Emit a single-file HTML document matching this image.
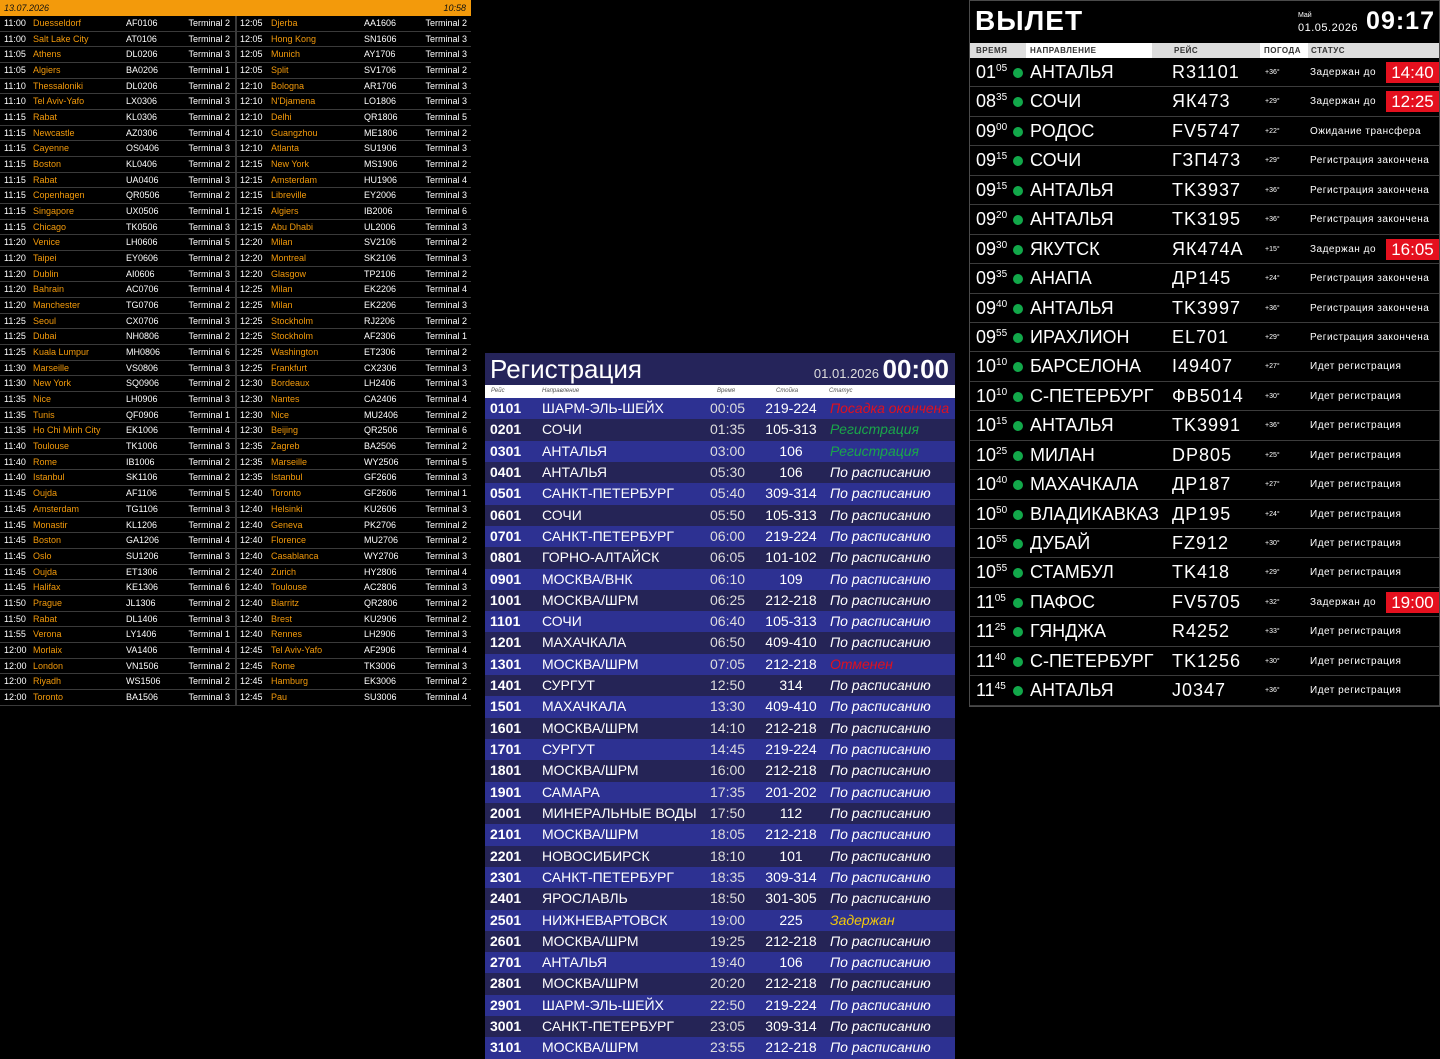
<!DOCTYPE html>
<html><head><meta charset="utf-8">
<style>
*{margin:0;padding:0;box-sizing:border-box}
body{width:1440px;height:1059px;background:#000;position:relative;overflow:hidden;font-family:"Liberation Sans",sans-serif;white-space:nowrap}
#L{position:absolute;left:0;top:0;width:471px;height:707px;background:#000}
#L .h{height:16px;background:#f39a0b;color:#111;font-size:9px;font-style:italic;line-height:16px;padding:0 4px;position:relative}
#L .h span{position:absolute;right:5px;top:0}
.col{position:absolute;top:16px;width:235px}
.c1{left:0}.c2{left:236px}
.vl{position:absolute;left:235px;top:16px;width:2px;height:690px;background:#3a3a3a}
.r{height:15.68px;border-bottom:1px solid #3a3a3a;position:relative;font-size:9px;color:#fff;line-height:15px}
.r span{position:absolute;top:0}
.r .a{left:4px}.r .b{left:33px;color:#f39a0b}.r .c{left:126px}.r .d{right:5px}
.c2 .r .a{left:4px}.c2 .r .b{left:35px}.c2 .r .c{left:128px}.c2 .r .d{right:4px}
#M{position:absolute;left:485px;top:353px;width:470px;height:706px;background:#252456}
#M .h{height:32px;background:#25245a;color:#fff;position:relative}
#M .h .t{position:absolute;left:5px;top:1px;font-size:26px}
#M .h .d{position:absolute;right:76px;top:13px;font-size:13px;color:#ddd}
#M .h .k{position:absolute;right:6px;top:1px;font-size:26px;font-weight:bold}
#M .ch{height:13px;background:#fff;position:relative;font-size:6px;font-style:italic;color:#555}
#M .ch span,.m span{position:absolute}
.m{height:21.32px;position:relative;color:#fff;font-size:14px;line-height:21px}
.m:nth-child(odd){background:#2d3192}
.m .a{left:5px;font-weight:bold}.m .b{left:57px}.m .c{left:225px;color:#ddd}.m .d{left:275px;width:62px;text-align:center}.m .e{left:345px;font-style:italic}
.red{color:#e0101e}.grn{color:#1aa64a}.yel{color:#f2c80c}
#R{position:absolute;left:969px;top:0;width:471px;height:707px;background:#000;border:1px solid #4a4a4a}
#R .h{height:42px;position:relative;color:#fff}
#R .h .t{position:absolute;left:5px;top:4px;font-size:28px;font-weight:bold;letter-spacing:1px}
#R .h .mo{position:absolute;left:328px;top:11px;font-size:7px}
#R .h .d{position:absolute;left:328px;top:21px;font-size:11px;letter-spacing:.5px}
#R .h .k{position:absolute;right:4px;top:6px;font-size:25px;font-weight:bold;letter-spacing:1px}
#R .ch{height:15px;background:#ddd;position:relative;font-size:8px;font-weight:bold;color:#333;letter-spacing:.5px;line-height:16px}
#R .ch span{position:absolute;top:0}
.q{height:29.45px;border-bottom:1px solid #3c3c3c;position:relative;color:#fff;line-height:29px}
.q span{position:absolute;top:0}
.q .a{left:6px;font-size:18px}.q .a sup{font-size:10px;vertical-align:7px;line-height:0}
.q .g{left:43px;top:10px;width:10px;height:10px;border-radius:50%;background:#12a84a}
.q .b{left:60px;font-size:18px}
.q .c{left:202px;font-size:18px;letter-spacing:1px}
.q .w{left:295px;font-size:7px}
.q .s{left:340px;font-size:10px;letter-spacing:.5px}
.q .x{left:416px;top:4px;width:53px;height:21px;background:#e5101e;font-size:17px;line-height:21px;text-align:center}
</style></head><body>
<div id="L">
<div class="h">13.07.2026<span>10:58</span></div>
<div class="vl"></div>
<div class="col c1">
<div class="r"><span class="a">11:00</span><span class="b">Duesseldorf</span><span class="c">AF0106</span><span class="d">Terminal 2</span></div>
<div class="r"><span class="a">11:00</span><span class="b">Salt Lake City</span><span class="c">AT0106</span><span class="d">Terminal 2</span></div>
<div class="r"><span class="a">11:05</span><span class="b">Athens</span><span class="c">DL0206</span><span class="d">Terminal 3</span></div>
<div class="r"><span class="a">11:05</span><span class="b">Algiers</span><span class="c">BA0206</span><span class="d">Terminal 1</span></div>
<div class="r"><span class="a">11:10</span><span class="b">Thessaloniki</span><span class="c">DL0206</span><span class="d">Terminal 2</span></div>
<div class="r"><span class="a">11:10</span><span class="b">Tel Aviv-Yafo</span><span class="c">LX0306</span><span class="d">Terminal 3</span></div>
<div class="r"><span class="a">11:15</span><span class="b">Rabat</span><span class="c">KL0306</span><span class="d">Terminal 2</span></div>
<div class="r"><span class="a">11:15</span><span class="b">Newcastle</span><span class="c">AZ0306</span><span class="d">Terminal 4</span></div>
<div class="r"><span class="a">11:15</span><span class="b">Cayenne</span><span class="c">OS0406</span><span class="d">Terminal 3</span></div>
<div class="r"><span class="a">11:15</span><span class="b">Boston</span><span class="c">KL0406</span><span class="d">Terminal 2</span></div>
<div class="r"><span class="a">11:15</span><span class="b">Rabat</span><span class="c">UA0406</span><span class="d">Terminal 3</span></div>
<div class="r"><span class="a">11:15</span><span class="b">Copenhagen</span><span class="c">QR0506</span><span class="d">Terminal 2</span></div>
<div class="r"><span class="a">11:15</span><span class="b">Singapore</span><span class="c">UX0506</span><span class="d">Terminal 1</span></div>
<div class="r"><span class="a">11:15</span><span class="b">Chicago</span><span class="c">TK0506</span><span class="d">Terminal 3</span></div>
<div class="r"><span class="a">11:20</span><span class="b">Venice</span><span class="c">LH0606</span><span class="d">Terminal 5</span></div>
<div class="r"><span class="a">11:20</span><span class="b">Taipei</span><span class="c">EY0606</span><span class="d">Terminal 2</span></div>
<div class="r"><span class="a">11:20</span><span class="b">Dublin</span><span class="c">AI0606</span><span class="d">Terminal 3</span></div>
<div class="r"><span class="a">11:20</span><span class="b">Bahrain</span><span class="c">AC0706</span><span class="d">Terminal 4</span></div>
<div class="r"><span class="a">11:20</span><span class="b">Manchester</span><span class="c">TG0706</span><span class="d">Terminal 2</span></div>
<div class="r"><span class="a">11:25</span><span class="b">Seoul</span><span class="c">CX0706</span><span class="d">Terminal 3</span></div>
<div class="r"><span class="a">11:25</span><span class="b">Dubai</span><span class="c">NH0806</span><span class="d">Terminal 2</span></div>
<div class="r"><span class="a">11:25</span><span class="b">Kuala Lumpur</span><span class="c">MH0806</span><span class="d">Terminal 6</span></div>
<div class="r"><span class="a">11:30</span><span class="b">Marseille</span><span class="c">VS0806</span><span class="d">Terminal 3</span></div>
<div class="r"><span class="a">11:30</span><span class="b">New York</span><span class="c">SQ0906</span><span class="d">Terminal 2</span></div>
<div class="r"><span class="a">11:35</span><span class="b">Nice</span><span class="c">LH0906</span><span class="d">Terminal 3</span></div>
<div class="r"><span class="a">11:35</span><span class="b">Tunis</span><span class="c">QF0906</span><span class="d">Terminal 1</span></div>
<div class="r"><span class="a">11:35</span><span class="b">Ho Chi Minh City</span><span class="c">EK1006</span><span class="d">Terminal 4</span></div>
<div class="r"><span class="a">11:40</span><span class="b">Toulouse</span><span class="c">TK1006</span><span class="d">Terminal 3</span></div>
<div class="r"><span class="a">11:40</span><span class="b">Rome</span><span class="c">IB1006</span><span class="d">Terminal 2</span></div>
<div class="r"><span class="a">11:40</span><span class="b">Istanbul</span><span class="c">SK1106</span><span class="d">Terminal 2</span></div>
<div class="r"><span class="a">11:45</span><span class="b">Oujda</span><span class="c">AF1106</span><span class="d">Terminal 5</span></div>
<div class="r"><span class="a">11:45</span><span class="b">Amsterdam</span><span class="c">TG1106</span><span class="d">Terminal 3</span></div>
<div class="r"><span class="a">11:45</span><span class="b">Monastir</span><span class="c">KL1206</span><span class="d">Terminal 2</span></div>
<div class="r"><span class="a">11:45</span><span class="b">Boston</span><span class="c">GA1206</span><span class="d">Terminal 4</span></div>
<div class="r"><span class="a">11:45</span><span class="b">Oslo</span><span class="c">SU1206</span><span class="d">Terminal 3</span></div>
<div class="r"><span class="a">11:45</span><span class="b">Oujda</span><span class="c">ET1306</span><span class="d">Terminal 2</span></div>
<div class="r"><span class="a">11:45</span><span class="b">Halifax</span><span class="c">KE1306</span><span class="d">Terminal 6</span></div>
<div class="r"><span class="a">11:50</span><span class="b">Prague</span><span class="c">JL1306</span><span class="d">Terminal 2</span></div>
<div class="r"><span class="a">11:50</span><span class="b">Rabat</span><span class="c">DL1406</span><span class="d">Terminal 3</span></div>
<div class="r"><span class="a">11:55</span><span class="b">Verona</span><span class="c">LY1406</span><span class="d">Terminal 1</span></div>
<div class="r"><span class="a">12:00</span><span class="b">Morlaix</span><span class="c">VA1406</span><span class="d">Terminal 4</span></div>
<div class="r"><span class="a">12:00</span><span class="b">London</span><span class="c">VN1506</span><span class="d">Terminal 2</span></div>
<div class="r"><span class="a">12:00</span><span class="b">Riyadh</span><span class="c">WS1506</span><span class="d">Terminal 2</span></div>
<div class="r"><span class="a">12:00</span><span class="b">Toronto</span><span class="c">BA1506</span><span class="d">Terminal 3</span></div>
</div>
<div class="col c2">
<div class="r"><span class="a">12:05</span><span class="b">Djerba</span><span class="c">AA1606</span><span class="d">Terminal 2</span></div>
<div class="r"><span class="a">12:05</span><span class="b">Hong Kong</span><span class="c">SN1606</span><span class="d">Terminal 3</span></div>
<div class="r"><span class="a">12:05</span><span class="b">Munich</span><span class="c">AY1706</span><span class="d">Terminal 3</span></div>
<div class="r"><span class="a">12:05</span><span class="b">Split</span><span class="c">SV1706</span><span class="d">Terminal 2</span></div>
<div class="r"><span class="a">12:10</span><span class="b">Bologna</span><span class="c">AR1706</span><span class="d">Terminal 3</span></div>
<div class="r"><span class="a">12:10</span><span class="b">N'Djamena</span><span class="c">LO1806</span><span class="d">Terminal 3</span></div>
<div class="r"><span class="a">12:10</span><span class="b">Delhi</span><span class="c">QR1806</span><span class="d">Terminal 5</span></div>
<div class="r"><span class="a">12:10</span><span class="b">Guangzhou</span><span class="c">ME1806</span><span class="d">Terminal 2</span></div>
<div class="r"><span class="a">12:10</span><span class="b">Atlanta</span><span class="c">SU1906</span><span class="d">Terminal 3</span></div>
<div class="r"><span class="a">12:15</span><span class="b">New York</span><span class="c">MS1906</span><span class="d">Terminal 2</span></div>
<div class="r"><span class="a">12:15</span><span class="b">Amsterdam</span><span class="c">HU1906</span><span class="d">Terminal 4</span></div>
<div class="r"><span class="a">12:15</span><span class="b">Libreville</span><span class="c">EY2006</span><span class="d">Terminal 3</span></div>
<div class="r"><span class="a">12:15</span><span class="b">Algiers</span><span class="c">IB2006</span><span class="d">Terminal 6</span></div>
<div class="r"><span class="a">12:15</span><span class="b">Abu Dhabi</span><span class="c">UL2006</span><span class="d">Terminal 3</span></div>
<div class="r"><span class="a">12:20</span><span class="b">Milan</span><span class="c">SV2106</span><span class="d">Terminal 2</span></div>
<div class="r"><span class="a">12:20</span><span class="b">Montreal</span><span class="c">SK2106</span><span class="d">Terminal 3</span></div>
<div class="r"><span class="a">12:20</span><span class="b">Glasgow</span><span class="c">TP2106</span><span class="d">Terminal 2</span></div>
<div class="r"><span class="a">12:25</span><span class="b">Milan</span><span class="c">EK2206</span><span class="d">Terminal 4</span></div>
<div class="r"><span class="a">12:25</span><span class="b">Milan</span><span class="c">EK2206</span><span class="d">Terminal 3</span></div>
<div class="r"><span class="a">12:25</span><span class="b">Stockholm</span><span class="c">RJ2206</span><span class="d">Terminal 2</span></div>
<div class="r"><span class="a">12:25</span><span class="b">Stockholm</span><span class="c">AF2306</span><span class="d">Terminal 1</span></div>
<div class="r"><span class="a">12:25</span><span class="b">Washington</span><span class="c">ET2306</span><span class="d">Terminal 2</span></div>
<div class="r"><span class="a">12:25</span><span class="b">Frankfurt</span><span class="c">CX2306</span><span class="d">Terminal 3</span></div>
<div class="r"><span class="a">12:30</span><span class="b">Bordeaux</span><span class="c">LH2406</span><span class="d">Terminal 3</span></div>
<div class="r"><span class="a">12:30</span><span class="b">Nantes</span><span class="c">CA2406</span><span class="d">Terminal 4</span></div>
<div class="r"><span class="a">12:30</span><span class="b">Nice</span><span class="c">MU2406</span><span class="d">Terminal 2</span></div>
<div class="r"><span class="a">12:30</span><span class="b">Beijing</span><span class="c">QR2506</span><span class="d">Terminal 6</span></div>
<div class="r"><span class="a">12:35</span><span class="b">Zagreb</span><span class="c">BA2506</span><span class="d">Terminal 2</span></div>
<div class="r"><span class="a">12:35</span><span class="b">Marseille</span><span class="c">WY2506</span><span class="d">Terminal 5</span></div>
<div class="r"><span class="a">12:35</span><span class="b">Istanbul</span><span class="c">GF2606</span><span class="d">Terminal 3</span></div>
<div class="r"><span class="a">12:40</span><span class="b">Toronto</span><span class="c">GF2606</span><span class="d">Terminal 1</span></div>
<div class="r"><span class="a">12:40</span><span class="b">Helsinki</span><span class="c">KU2606</span><span class="d">Terminal 3</span></div>
<div class="r"><span class="a">12:40</span><span class="b">Geneva</span><span class="c">PK2706</span><span class="d">Terminal 2</span></div>
<div class="r"><span class="a">12:40</span><span class="b">Florence</span><span class="c">MU2706</span><span class="d">Terminal 2</span></div>
<div class="r"><span class="a">12:40</span><span class="b">Casablanca</span><span class="c">WY2706</span><span class="d">Terminal 3</span></div>
<div class="r"><span class="a">12:40</span><span class="b">Zurich</span><span class="c">HY2806</span><span class="d">Terminal 4</span></div>
<div class="r"><span class="a">12:40</span><span class="b">Toulouse</span><span class="c">AC2806</span><span class="d">Terminal 3</span></div>
<div class="r"><span class="a">12:40</span><span class="b">Biarritz</span><span class="c">QR2806</span><span class="d">Terminal 2</span></div>
<div class="r"><span class="a">12:40</span><span class="b">Brest</span><span class="c">KU2906</span><span class="d">Terminal 2</span></div>
<div class="r"><span class="a">12:40</span><span class="b">Rennes</span><span class="c">LH2906</span><span class="d">Terminal 3</span></div>
<div class="r"><span class="a">12:45</span><span class="b">Tel Aviv-Yafo</span><span class="c">AF2906</span><span class="d">Terminal 4</span></div>
<div class="r"><span class="a">12:45</span><span class="b">Rome</span><span class="c">TK3006</span><span class="d">Terminal 3</span></div>
<div class="r"><span class="a">12:45</span><span class="b">Hamburg</span><span class="c">EK3006</span><span class="d">Terminal 2</span></div>
<div class="r"><span class="a">12:45</span><span class="b">Pau</span><span class="c">SU3006</span><span class="d">Terminal 4</span></div>
</div>
</div>

<div id="M">
<div class="h"><span class="t">Регистрация</span><span class="d">01.01.2026</span><span class="k">00:00</span></div>
<div class="ch"><span style="left:6px;top:3px">Рейс</span><span style="left:57px;top:3px">Направление</span><span style="left:232px;top:3px">Время</span><span style="left:291px;top:3px">Стойка</span><span style="left:344px;top:3px">Статус</span></div>
<div>
<div class="m"><span class="a">0101</span><span class="b">ШАРМ-ЭЛЬ-ШЕЙХ</span><span class="c">00:05</span><span class="d">219-224</span><span class="e red">Посадка окончена</span></div>
<div class="m"><span class="a">0201</span><span class="b">СОЧИ</span><span class="c">01:35</span><span class="d">105-313</span><span class="e grn">Регистрация</span></div>
<div class="m"><span class="a">0301</span><span class="b">АНТАЛЬЯ</span><span class="c">03:00</span><span class="d">106</span><span class="e grn">Регистрация</span></div>
<div class="m"><span class="a">0401</span><span class="b">АНТАЛЬЯ</span><span class="c">05:30</span><span class="d">106</span><span class="e">По расписанию</span></div>
<div class="m"><span class="a">0501</span><span class="b">САНКТ-ПЕТЕРБУРГ</span><span class="c">05:40</span><span class="d">309-314</span><span class="e">По расписанию</span></div>
<div class="m"><span class="a">0601</span><span class="b">СОЧИ</span><span class="c">05:50</span><span class="d">105-313</span><span class="e">По расписанию</span></div>
<div class="m"><span class="a">0701</span><span class="b">САНКТ-ПЕТЕРБУРГ</span><span class="c">06:00</span><span class="d">219-224</span><span class="e">По расписанию</span></div>
<div class="m"><span class="a">0801</span><span class="b">ГОРНО-АЛТАЙСК</span><span class="c">06:05</span><span class="d">101-102</span><span class="e">По расписанию</span></div>
<div class="m"><span class="a">0901</span><span class="b">МОСКВА/ВНК</span><span class="c">06:10</span><span class="d">109</span><span class="e">По расписанию</span></div>
<div class="m"><span class="a">1001</span><span class="b">МОСКВА/ШРМ</span><span class="c">06:25</span><span class="d">212-218</span><span class="e">По расписанию</span></div>
<div class="m"><span class="a">1101</span><span class="b">СОЧИ</span><span class="c">06:40</span><span class="d">105-313</span><span class="e">По расписанию</span></div>
<div class="m"><span class="a">1201</span><span class="b">МАХАЧКАЛА</span><span class="c">06:50</span><span class="d">409-410</span><span class="e">По расписанию</span></div>
<div class="m"><span class="a">1301</span><span class="b">МОСКВА/ШРМ</span><span class="c">07:05</span><span class="d">212-218</span><span class="e red">Отменен</span></div>
<div class="m"><span class="a">1401</span><span class="b">СУРГУТ</span><span class="c">12:50</span><span class="d">314</span><span class="e">По расписанию</span></div>
<div class="m"><span class="a">1501</span><span class="b">МАХАЧКАЛА</span><span class="c">13:30</span><span class="d">409-410</span><span class="e">По расписанию</span></div>
<div class="m"><span class="a">1601</span><span class="b">МОСКВА/ШРМ</span><span class="c">14:10</span><span class="d">212-218</span><span class="e">По расписанию</span></div>
<div class="m"><span class="a">1701</span><span class="b">СУРГУТ</span><span class="c">14:45</span><span class="d">219-224</span><span class="e">По расписанию</span></div>
<div class="m"><span class="a">1801</span><span class="b">МОСКВА/ШРМ</span><span class="c">16:00</span><span class="d">212-218</span><span class="e">По расписанию</span></div>
<div class="m"><span class="a">1901</span><span class="b">САМАРА</span><span class="c">17:35</span><span class="d">201-202</span><span class="e">По расписанию</span></div>
<div class="m"><span class="a">2001</span><span class="b">МИНЕРАЛЬНЫЕ ВОДЫ</span><span class="c">17:50</span><span class="d">112</span><span class="e">По расписанию</span></div>
<div class="m"><span class="a">2101</span><span class="b">МОСКВА/ШРМ</span><span class="c">18:05</span><span class="d">212-218</span><span class="e">По расписанию</span></div>
<div class="m"><span class="a">2201</span><span class="b">НОВОСИБИРСК</span><span class="c">18:10</span><span class="d">101</span><span class="e">По расписанию</span></div>
<div class="m"><span class="a">2301</span><span class="b">САНКТ-ПЕТЕРБУРГ</span><span class="c">18:35</span><span class="d">309-314</span><span class="e">По расписанию</span></div>
<div class="m"><span class="a">2401</span><span class="b">ЯРОСЛАВЛЬ</span><span class="c">18:50</span><span class="d">301-305</span><span class="e">По расписанию</span></div>
<div class="m"><span class="a">2501</span><span class="b">НИЖНЕВАРТОВСК</span><span class="c">19:00</span><span class="d">225</span><span class="e yel">Задержан</span></div>
<div class="m"><span class="a">2601</span><span class="b">МОСКВА/ШРМ</span><span class="c">19:25</span><span class="d">212-218</span><span class="e">По расписанию</span></div>
<div class="m"><span class="a">2701</span><span class="b">АНТАЛЬЯ</span><span class="c">19:40</span><span class="d">106</span><span class="e">По расписанию</span></div>
<div class="m"><span class="a">2801</span><span class="b">МОСКВА/ШРМ</span><span class="c">20:20</span><span class="d">212-218</span><span class="e">По расписанию</span></div>
<div class="m"><span class="a">2901</span><span class="b">ШАРМ-ЭЛЬ-ШЕЙХ</span><span class="c">22:50</span><span class="d">219-224</span><span class="e">По расписанию</span></div>
<div class="m"><span class="a">3001</span><span class="b">САНКТ-ПЕТЕРБУРГ</span><span class="c">23:05</span><span class="d">309-314</span><span class="e">По расписанию</span></div>
<div class="m"><span class="a">3101</span><span class="b">МОСКВА/ШРМ</span><span class="c">23:55</span><span class="d">212-218</span><span class="e">По расписанию</span></div>
</div>
</div>

<div id="R">
<div class="h"><span class="t">ВЫЛЕТ</span><span class="mo">Май</span><span class="d">01.05.2026</span><span class="k">09:17</span></div>
<div class="ch"><span style="left:6px">ВРЕМЯ</span><span style="left:56px;width:126px;background:#fff;padding-left:4px;height:15px">НАПРАВЛЕНИЕ</span><span style="left:204px">РЕЙС</span><span style="left:290px;width:48px;background:#fff;padding-left:4px;height:15px">ПОГОДА</span><span style="left:341px">СТАТУС</span></div>
<div class="q"><span class="a">01<sup>05</sup></span><span class="g"></span><span class="b">АНТАЛЬЯ</span><span class="c">R31101</span><span class="w">+36°</span><span class="s">Задержан до</span><span class="x">14:40</span></div>
<div class="q"><span class="a">08<sup>35</sup></span><span class="g"></span><span class="b">СОЧИ</span><span class="c">ЯК473</span><span class="w">+29°</span><span class="s">Задержан до</span><span class="x">12:25</span></div>
<div class="q"><span class="a">09<sup>00</sup></span><span class="g"></span><span class="b">РОДОС</span><span class="c">FV5747</span><span class="w">+22°</span><span class="s">Ожидание трансфера</span></div>
<div class="q"><span class="a">09<sup>15</sup></span><span class="g"></span><span class="b">СОЧИ</span><span class="c">ГЗП473</span><span class="w">+29°</span><span class="s">Регистрация закончена</span></div>
<div class="q"><span class="a">09<sup>15</sup></span><span class="g"></span><span class="b">АНТАЛЬЯ</span><span class="c">TK3937</span><span class="w">+36°</span><span class="s">Регистрация закончена</span></div>
<div class="q"><span class="a">09<sup>20</sup></span><span class="g"></span><span class="b">АНТАЛЬЯ</span><span class="c">TK3195</span><span class="w">+36°</span><span class="s">Регистрация закончена</span></div>
<div class="q"><span class="a">09<sup>30</sup></span><span class="g"></span><span class="b">ЯКУТСК</span><span class="c">ЯК474А</span><span class="w">+15°</span><span class="s">Задержан до</span><span class="x">16:05</span></div>
<div class="q"><span class="a">09<sup>35</sup></span><span class="g"></span><span class="b">АНАПА</span><span class="c">ДР145</span><span class="w">+24°</span><span class="s">Регистрация закончена</span></div>
<div class="q"><span class="a">09<sup>40</sup></span><span class="g"></span><span class="b">АНТАЛЬЯ</span><span class="c">TK3997</span><span class="w">+36°</span><span class="s">Регистрация закончена</span></div>
<div class="q"><span class="a">09<sup>55</sup></span><span class="g"></span><span class="b">ИРАХЛИОН</span><span class="c">EL701</span><span class="w">+29°</span><span class="s">Регистрация закончена</span></div>
<div class="q"><span class="a">10<sup>10</sup></span><span class="g"></span><span class="b">БАРСЕЛОНА</span><span class="c">I49407</span><span class="w">+27°</span><span class="s">Идет регистрация</span></div>
<div class="q"><span class="a">10<sup>10</sup></span><span class="g"></span><span class="b">С-ПЕТЕРБУРГ</span><span class="c">ФВ5014</span><span class="w">+30°</span><span class="s">Идет регистрация</span></div>
<div class="q"><span class="a">10<sup>15</sup></span><span class="g"></span><span class="b">АНТАЛЬЯ</span><span class="c">TK3991</span><span class="w">+36°</span><span class="s">Идет регистрация</span></div>
<div class="q"><span class="a">10<sup>25</sup></span><span class="g"></span><span class="b">МИЛАН</span><span class="c">DP805</span><span class="w">+25°</span><span class="s">Идет регистрация</span></div>
<div class="q"><span class="a">10<sup>40</sup></span><span class="g"></span><span class="b">МАХАЧКАЛА</span><span class="c">ДР187</span><span class="w">+27°</span><span class="s">Идет регистрация</span></div>
<div class="q"><span class="a">10<sup>50</sup></span><span class="g"></span><span class="b">ВЛАДИКАВКАЗ</span><span class="c">ДР195</span><span class="w">+24°</span><span class="s">Идет регистрация</span></div>
<div class="q"><span class="a">10<sup>55</sup></span><span class="g"></span><span class="b">ДУБАЙ</span><span class="c">FZ912</span><span class="w">+30°</span><span class="s">Идет регистрация</span></div>
<div class="q"><span class="a">10<sup>55</sup></span><span class="g"></span><span class="b">СТАМБУЛ</span><span class="c">TK418</span><span class="w">+29°</span><span class="s">Идет регистрация</span></div>
<div class="q"><span class="a">11<sup>05</sup></span><span class="g"></span><span class="b">ПАФОС</span><span class="c">FV5705</span><span class="w">+32°</span><span class="s">Задержан до</span><span class="x">19:00</span></div>
<div class="q"><span class="a">11<sup>25</sup></span><span class="g"></span><span class="b">ГЯНДЖА</span><span class="c">R4252</span><span class="w">+33°</span><span class="s">Идет регистрация</span></div>
<div class="q"><span class="a">11<sup>40</sup></span><span class="g"></span><span class="b">С-ПЕТЕРБУРГ</span><span class="c">TK1256</span><span class="w">+30°</span><span class="s">Идет регистрация</span></div>
<div class="q"><span class="a">11<sup>45</sup></span><span class="g"></span><span class="b">АНТАЛЬЯ</span><span class="c">J0347</span><span class="w">+36°</span><span class="s">Идет регистрация</span></div>
</div>
</body></html>
